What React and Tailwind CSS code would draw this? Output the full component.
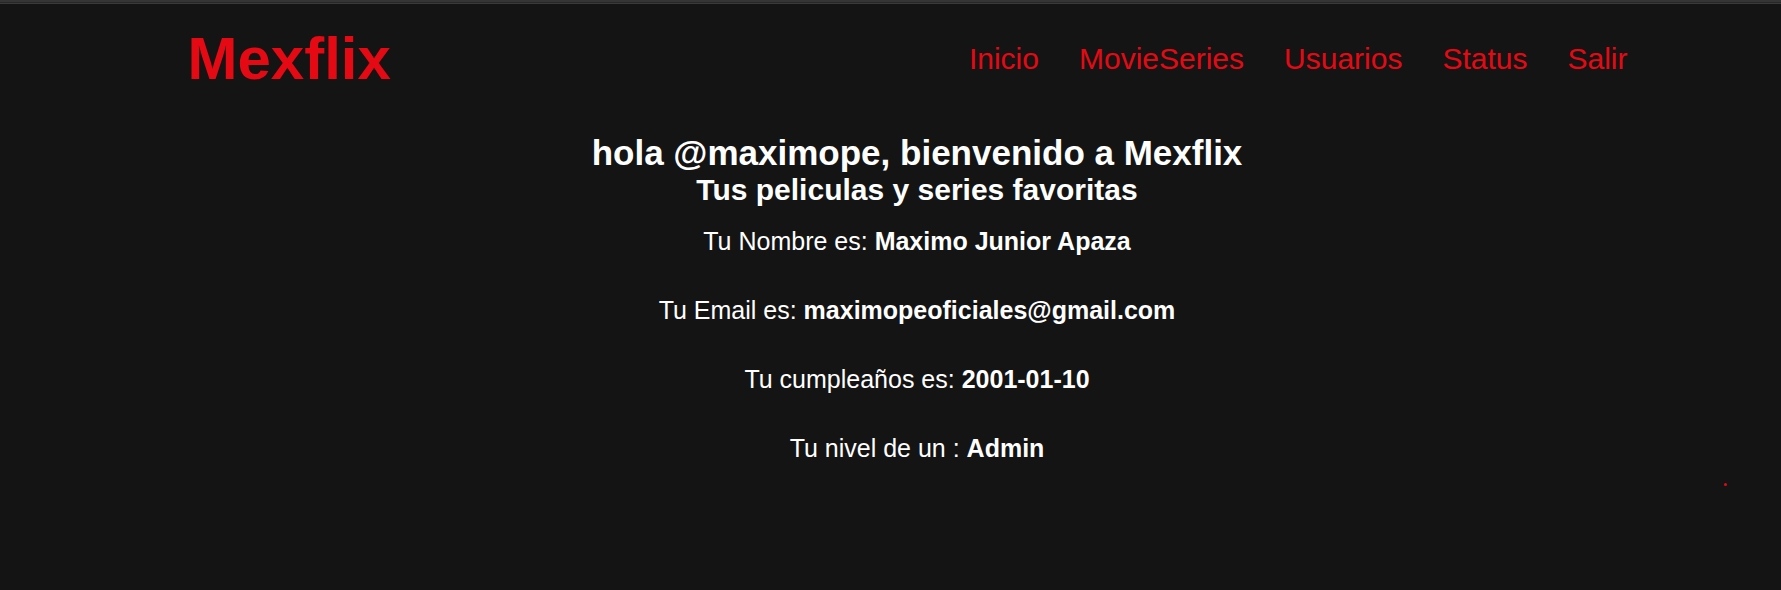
const links = ["Inicio", "MovieSeries", "Usuarios", "Status", "Salir"];

const details = [
  ["Tu Nombre es:", "Maximo Junior Apaza"],
  ["Tu Email es:", "maximopeoficiales@gmail.com"],
  ["Tu cumpleaños es:", "2001-01-10"],
  ["Tu nivel de un :", "Admin"],
];

export default function App() {
  return (
    <div className="relative min-h-screen bg-[#141414] font-['Liberation_Sans',Arial,sans-serif] text-white">
      <div className="h-1 border-b border-[#3a3a3a] bg-[#272727]">
        <div className="h-0.5 bg-[#353535]" />
      </div>
      <header className="pt-5 pl-[34px]">
        <div className="mx-auto flex max-w-[1440px] items-center justify-between">
          <h1 className="text-[60px] leading-[69px] font-bold text-[#e50914]">Mexflix</h1>
          <nav className="flex gap-10">
            {links.map((label) => (
              <a key={label} href="#" className="text-[30px] leading-[34px] text-[#e50914]">
                {label}
              </a>
            ))}
          </nav>
        </div>
      </header>
      <main className="pt-10 pl-[53px] text-center">
        <h2 className="text-[35px] leading-[40px] font-bold">hola @maximope, bienvenido a Mexflix</h2>
        <h3 className="text-[30px] leading-[34px] font-bold">Tus peliculas y series favoritas</h3>
        {details.map(([label, value]) => (
          <p key={label} className="mt-5 mb-10 text-[25px] leading-[29px]">
            {label} <b>{value}</b>
          </p>
        ))}
      </main>
      <span className="absolute top-[483px] right-[54px] size-[3px] rounded-full bg-[#e50914]" />
    </div>
  );
}
